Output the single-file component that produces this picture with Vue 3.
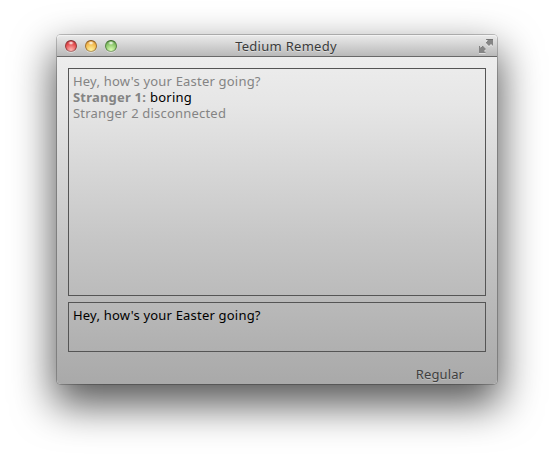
<script setup>
const lights = ['close', 'minimize', 'zoom']
const message = "Hey, how's your Easter going?"
</script>

<template>
  <main class="desktop">
    <section class="window">
      <header class="titlebar">
        <div class="lights">
          <span v-for="light in lights" :key="light" class="light" :class="light"></span>
        </div>
        <h1 class="title">Tedium Remedy</h1>
        <svg class="expand" width="14" height="15" viewBox="0 0 14 15">
          <g fill="#fff" fill-opacity=".5" transform="translate(0 1)">
            <path d="M7 0H14V7L12 5L10 7L7 4L9 2Z" />
            <path d="M0 14V7L2 9L4 7L7 10L5 12L7 14Z" />
          </g>
          <g fill="#858585">
            <path d="M7 0H14V7L12 5L10 7L7 4L9 2Z" />
            <path d="M0 14V7L2 9L4 7L7 10L5 12L7 14Z" />
          </g>
          <path d="M7 .5H14M0 7.5H1M9 2L7 4M4 7L2 9" fill="none" stroke="#6c6c6c" stroke-width=".7" />
        </svg>
      </header>
      <div class="content">
        <div class="panel log">
          <p class="line question">{{ message }}</p>
          <p class="line reply"><b class="name">Stranger 1:</b><span class="said">boring</span></p>
          <p class="line status">Stranger 2 disconnected</p>
        </div>
        <div class="panel entry"><p class="line typed">{{ message }}</p></div>
        <footer class="mode">Regular</footer>
      </div>
    </section>
  </main>
</template>

<style>
body {
  background: #fff;
  overflow: hidden;
}
</style>

<style scoped>
.desktop {
  box-sizing: border-box;
  width: 554px;
  height: 463px;
  padding: 35px 57px 0;
  overflow: hidden;
  font: 13px/16px "Noto Sans", "Open Sans", sans-serif;
}
.window {
  display: flex;
  flex-direction: column;
  box-sizing: border-box;
  width: 440px;
  height: 349px;
  border-radius: 4px;
  background: linear-gradient(#ededed 22px, #e6e6e6 70px, #dfdfdf 100px, #c6c6c6 205px, #a9a9a9 100%);
  box-shadow: 0 0 0 1px rgba(0, 0, 0, .22), 0 18px 40px 3px rgba(0, 0, 0, .66);
}
.titlebar {
  display: grid;
  grid-template-columns: 60px 1fr 60px;
  align-items: center;
  box-sizing: border-box;
  height: 22px;
  padding: 0 4px 0 8px;
  border-bottom: 1px solid #686868;
  border-radius: 4px 4px 0 0;
  background: linear-gradient(#ebebeb, #d2d2d2 50%, #b9b9b9);
  box-shadow: inset 0 1px #f3f3f3;
}
.lights {
  display: flex;
  gap: 8px;
  padding-top: 1px;
}
.light {
  box-sizing: border-box;
  width: 12px;
  height: 12px;
  border: 1px solid;
  border-radius: 50%;
  box-shadow: 0 1px rgba(255, 255, 255, .4);
}
.close {
  border-color: #7d292b #963c3c #b27676;
  background: radial-gradient(ellipse 3px 2px at 50% 20%, #fff 0, rgba(255, 255, 255, 0) 100%), radial-gradient(circle at 50% 90%, #ffb8b3, #e4494c 65%, #bd3238);
}
.minimize {
  border-color: #855219 #a27330 #b69c63;
  background: radial-gradient(ellipse 3px 2px at 50% 20%, #fff 0, rgba(255, 255, 255, 0) 100%), radial-gradient(circle at 50% 90%, #fff4a0, #f3b74b 65%, #c98731);
}
.zoom {
  border-color: #376526 #578543 #87a675;
  background: radial-gradient(ellipse 3px 2px at 50% 20%, #fff 0, rgba(255, 255, 255, 0) 100%), radial-gradient(circle at 50% 90%, #daffb3, #86c266 65%, #548c40);
}
.title {
  margin: 0;
  padding-left: 14px;
  font-size: 13px;
  font-weight: 400;
  line-height: 16px;
  letter-spacing: .28px;
  text-align: center;
  color: #3b3b3b;
  text-shadow: 0 1px rgba(255, 255, 255, .4);
}
.expand {
  justify-self: end;
  margin-top: 2px;
}
.content {
  display: flex;
  flex: 1;
  flex-direction: column;
  padding: 11px 11px 0;
}
.panel {
  box-sizing: border-box;
  border: 1px solid #555;
  padding: 4px;
}
.log {
  height: 228px;
  color: #848484;
}
.entry {
  height: 50px;
  margin-top: 6px;
  color: #000;
}
.line {
  margin: 0;
  white-space: nowrap;
  letter-spacing: .2px;
}
.name {
  margin-right: 4px;
}
.said {
  color: #000;
}
.mode {
  margin-top: 14px;
  padding-right: 22px;
  text-align: right;
  letter-spacing: .1px;
  color: #404040;
  text-shadow: 0 1px rgba(255, 255, 255, .25);
}
</style>
